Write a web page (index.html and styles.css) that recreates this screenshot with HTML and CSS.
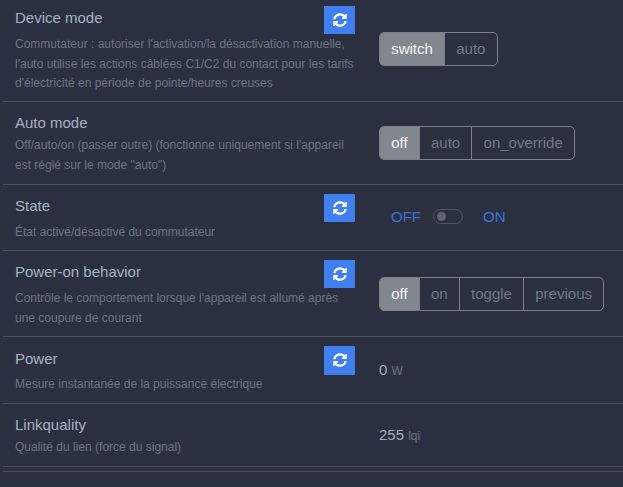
FILE: index.html
```html
<!DOCTYPE html>
<html lang="fr">
<head>
<meta charset="utf-8">
<title>Device settings</title>
<link rel="stylesheet" href="styles.css">
</head>
<body>
<svg class="defs" width="0" height="0" aria-hidden="true"><symbol id="sync" viewBox="0 0 512 512"><path fill="currentColor" d="M370.72 133.28C339.458 104.008 298.888 87.962 255.848 88c-77.458.068-144.328 53.178-162.791 126.85-1.344 5.363-6.122 9.15-11.651 9.15H24.103c-7.498 0-13.194-6.807-11.807-14.176C33.933 94.924 134.813 8 256 8c66.448 0 126.791 26.136 171.315 68.685L463.03 40.97C478.149 25.851 504 36.559 504 57.941V192c0 13.255-10.745 24-24 24H345.941c-21.382 0-32.09-25.851-16.971-40.971l41.75-41.749zM32 296h134.059c21.382 0 32.09 25.851 16.971 40.971l-41.75 41.75c31.262 29.273 71.835 45.319 114.876 45.28 77.418-.07 144.315-53.144 162.787-126.849 1.344-5.363 6.122-9.15 11.651-9.15h57.304c7.498 0 13.194 6.807 11.807 14.176C478.067 417.076 377.187 504 256 504c-66.448 0-126.791-26.136-171.315-68.685L48.97 471.03C33.851 486.149 8 475.441 8 454.059V320c0-13.255 10.745-24 24-24z"/></symbol></svg>
<main class="list">
  <section class="row row-first">
    <div class="info info-first">
      <button class="refresh"><svg class="icon"><use href="#sync"/></svg></button>
      <div class="title">Device mode</div>
      <p class="desc">Commutateur : autoriser l'activation/la désactivation manuelle, l'auto utilise les actions câblées C1/C2 du contact pour les tarifs d'électricité en période de pointe/heures creuses</p>
    </div>
    <div class="control">
      <div class="group"><span class="opt active">switch</span><span class="opt">auto</span></div>
    </div>
  </section>
  <section class="row row-auto">
    <div class="info">
      <div class="title">Auto mode</div>
      <p class="desc">Off/auto/on (passer outre) (fonctionne uniquement si l'appareil est réglé sur le mode "auto")</p>
    </div>
    <div class="control">
      <div class="group"><span class="opt active">off</span><span class="opt">auto</span><span class="opt">on_override</span></div>
    </div>
  </section>
  <section class="row row-state">
    <div class="info info-action">
      <button class="refresh"><svg class="icon"><use href="#sync"/></svg></button>
      <div class="title">State</div>
      <p class="desc">État activé/désactivé du commutateur</p>
    </div>
    <div class="control toggle-wrap">
      <span class="state-label">OFF</span>
      <span class="toggle"><span class="knob"></span></span>
      <span class="state-label">ON</span>
    </div>
  </section>
  <section class="row row-power-on">
    <div class="info info-action">
      <button class="refresh"><svg class="icon"><use href="#sync"/></svg></button>
      <div class="title">Power-on behavior</div>
      <p class="desc">Contrôle le comportement lorsque l'appareil est allumé après une coupure de courant</p>
    </div>
    <div class="control">
      <div class="group"><span class="opt active">off</span><span class="opt">on</span><span class="opt">toggle</span><span class="opt">previous</span></div>
    </div>
  </section>
  <section class="row row-power">
    <div class="info">
      <button class="refresh refresh-tall"><svg class="icon"><use href="#sync"/></svg></button>
      <div class="title title-tall">Power</div>
      <p class="desc">Mesure instantanée de la puissance électrique</p>
    </div>
    <div class="control readout"><span class="value">0</span> <span class="unit">W</span></div>
  </section>
  <section class="row row-link">
    <div class="info">
      <div class="title">Linkquality</div>
      <p class="desc">Qualité du lien (force du signal)</p>
    </div>
    <div class="control readout"><span class="value">255</span> <span class="unit">lqi</span></div>
  </section>
  <div class="row-empty"></div>
</main>
</body>
</html>
```
FILE: styles.css
```css
* { box-sizing: border-box; }
html, body { margin: 0; padding: 0; height: 100%; }
body {
  background: #2a3040;
  color: #a6adbb;
  font-family: "Liberation Sans", Arial, sans-serif;
  overflow: hidden;
}
.defs { position: absolute; }
.list { margin-left: 3px; }
.row {
  display: flex;
  align-items: center;
  border-bottom: 1px solid #4a4f5b;
}
.row-first { height: 102px; padding-bottom: 3px; }
.row-auto { height: 83px; }
.row-state { height: 66px; }
.row-power-on { height: 86px; }
.row-power { height: 67px; }
.row-link { height: 63px; }
.row-empty { height: 5px; border-bottom: 1px solid #4a4f5b; }
.info { width: 364px; flex: none; padding: 0 12px; }
.info-first { padding-top: 2px; }
.info-action { padding-top: 1px; }
.title { font-size: 15px; line-height: 24px; color: #a9b2c0; }
.title-tall { line-height: 26px; }
.desc {
  clear: both;
  margin: 1px 0 0;
  font-size: 12px;
  line-height: 19.5px;
  color: #6f7582;
}
.refresh {
  float: right;
  width: 31px;
  height: 28px;
  margin-bottom: 1px;
  padding: 0;
  border: 0;
  background: #3f7fef;
  color: #fff;
  display: flex;
  align-items: center;
  justify-content: center;
}
.refresh-tall { height: 29px; margin-bottom: 0; }
.icon { width: 14px; height: 14px; }
.control { padding-left: 12px; font-size: 15px; }
.group {
  display: inline-flex;
  height: 34px;
  border: 1px solid #7b808b;
  border-radius: 5px;
  overflow: hidden;
}
.opt {
  padding: 0 11.2px;
  line-height: 32px;
  color: #737986;
  border-left: 1px solid #7b808b;
}
.opt:first-child { border-left: 0; }
.opt.active { background: #82868f; color: #f2f3f5; }
.toggle-wrap { display: flex; align-items: center; padding: 0 0 2px 24px; }
.readout { padding-bottom: 2px; }
.state-label { color: #3b72d4; font-size: 15px; }
.toggle {
  width: 30px;
  height: 15px;
  margin: 0 20px 0 12px;
  border: 1px solid #4f5461;
  border-radius: 8px;
  padding: 2px 3px;
}
.knob { display: block; width: 9px; height: 9px; border-radius: 50%; background: #5f6470; }
.value { color: #a6adbb; }
.unit { font-size: 12px; color: #6f7582; }
```
